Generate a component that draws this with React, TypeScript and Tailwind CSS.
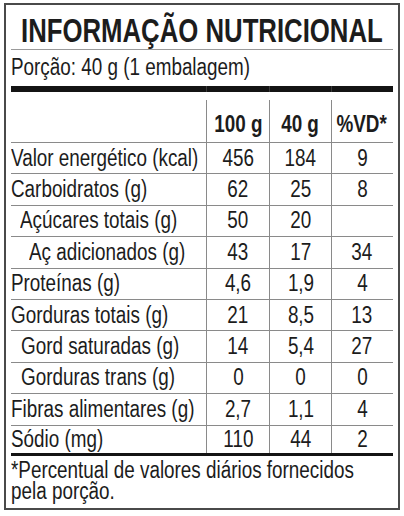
import React from 'react'

const font = { fontFamily: '"Liberation Sans", Arial, sans-serif' }

// Liberation Sans squeezed to the width of a narrow face
function Narrow({ children, center, tight }: { children: React.ReactNode; center?: boolean; tight?: boolean }) {
  return (
    <span
      className={
        'inline-block whitespace-nowrap ' +
        (tight ? 'scale-x-[0.78] ' : 'scale-x-[0.82] ') +
        (center ? 'origin-center' : 'origin-left')
      }
    >
      {children}
    </span>
  )
}

const rows: { label: string; indent: string; a: string; b: string; vd: string }[] = [
  { label: 'Valor energético (kcal)', indent: 'pl-0', a: '456', b: '184', vd: '9' },
  { label: 'Carboidratos (g)', indent: 'pl-0', a: '62', b: '25', vd: '8' },
  { label: 'Açúcares totais (g)', indent: 'pl-[9px]', a: '50', b: '20', vd: '' },
  { label: 'Aç adicionados (g)', indent: 'pl-[18px]', a: '43', b: '17', vd: '34' },
  { label: 'Proteínas (g)', indent: 'pl-0', a: '4,6', b: '1,9', vd: '4' },
  { label: 'Gorduras totais (g)', indent: 'pl-0', a: '21', b: '8,5', vd: '13' },
  { label: 'Gord saturadas (g)', indent: 'pl-[10px]', a: '14', b: '5,4', vd: '27' },
  { label: 'Gorduras trans (g)', indent: 'pl-[10px]', a: '0', b: '0', vd: '0' },
  { label: 'Fibras alimentares (g)', indent: 'pl-0', a: '2,7', b: '1,1', vd: '4' },
  { label: 'Sódio (mg)', indent: 'pl-0', a: '110', b: '44', vd: '2' },
]

export default function App() {
  return (
    <div className="w-[404px] h-[516px] overflow-hidden bg-white pt-[3px] pl-[4px] text-[#1c1c1c]" style={font}>
      <div className="w-[396px] h-[507px] overflow-hidden border-2 border-[#4a4a4a] px-[5px]">
        {/* Title */}
        <div className="h-[45px] flex items-end justify-center border-b border-[#9a9a9a]">
          <h1 className="text-[33px] font-bold leading-none pb-[2px]">
            <Narrow center tight>INFORMAÇÃO NUTRICIONAL</Narrow>
          </h1>
        </div>
        <div className="h-[36px] flex items-center text-[23px] leading-none pb-[2px]">
          <Narrow>Porção: 40 g (1 embalagem)</Narrow>
        </div>

        {/* thick bar */}
        <div className="grid grid-cols-[195px_63px_62px_61px] h-[6px] bg-[#141414]">
          <div />
          <div className="border-l border-[#3a3a3a]" />
          <div className="border-l border-[#3a3a3a]" />
          <div className="border-l border-[#3a3a3a]" />
        </div>

        {/* header */}
        <div className="grid grid-cols-[195px_63px_62px_61px] h-[50px] text-[23px] font-bold leading-none">
          <div />
          <div className="mt-[8px] border-l border-[#8a8a8a] flex items-end justify-center pb-[6px]">
            <Narrow center>100 g</Narrow>
          </div>
          <div className="mt-[8px] border-l border-[#8a8a8a] flex items-end justify-center pb-[6px]">
            <Narrow center>40 g</Narrow>
          </div>
          <div className="mt-[8px] border-l border-[#8a8a8a] flex items-end justify-center pb-[6px]">
            <Narrow center>%VD*</Narrow>
          </div>
        </div>

        {rows.map((r, i) => (
          <div
            key={r.label}
            className={
              'grid grid-cols-[195px_63px_62px_61px] h-[31.4px] text-[23px] leading-none border-t border-[#8a8a8a] ' +
              (i === rows.length - 1 ? 'border-b-[3px] border-b-[#141414]' : '')
            }
          >
            <div className={'flex items-center ' + r.indent}>
              <Narrow>{r.label}</Narrow>
            </div>
            <div className="border-l border-[#8a8a8a] flex items-center justify-center">
              <Narrow center>{r.a}</Narrow>
            </div>
            <div className="border-l border-[#8a8a8a] flex items-center justify-center">
              <Narrow center>{r.b}</Narrow>
            </div>
            <div className="border-l border-[#8a8a8a] flex items-center justify-center">
              <Narrow center>{r.vd}</Narrow>
            </div>
          </div>
        ))}

        <div className="text-[23px] leading-[21px] pt-[4px]">
          <div><Narrow>*Percentual de valores diários fornecidos</Narrow></div>
          <div><Narrow>pela porção.</Narrow></div>
        </div>
      </div>
    </div>
  )
}
